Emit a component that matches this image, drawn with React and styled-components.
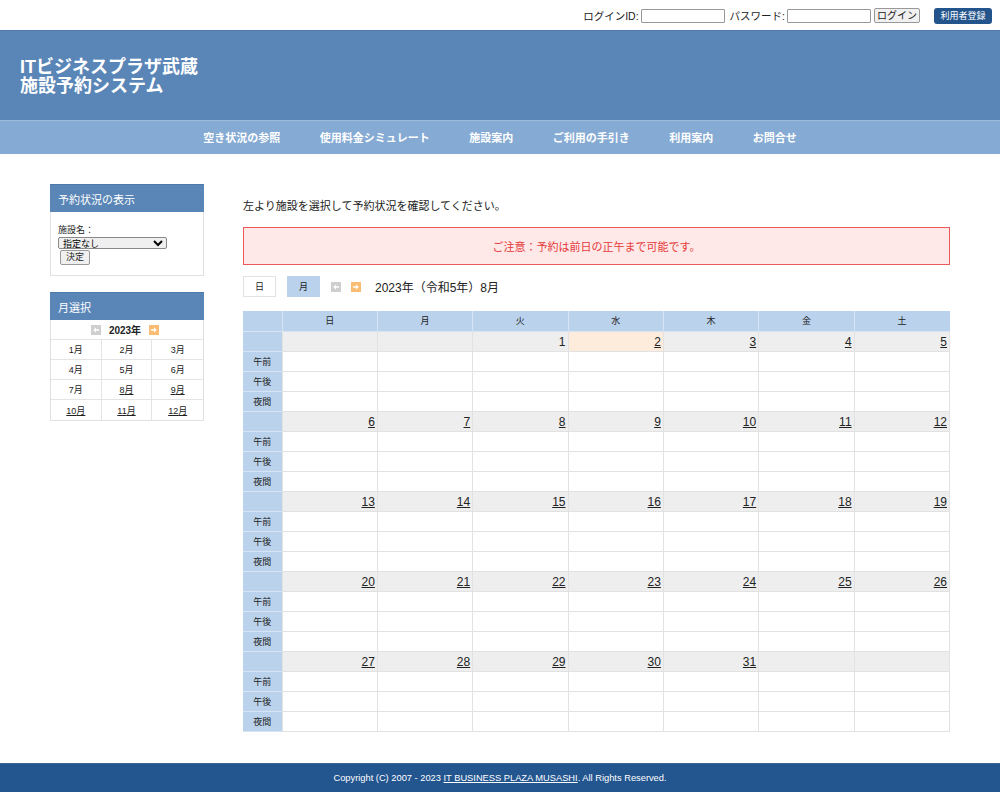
import React from 'react';
import styled, { createGlobalStyle } from 'styled-components';

const GlobalStyle = createGlobalStyle`
  html, body { margin: 0; padding: 0; background: #fff; }
  body {
    font-family: "Liberation Sans", "Noto Sans CJK JP", sans-serif;
    color: #222;
  }
  * { box-sizing: border-box; }
`;

const TopBar = styled.div`
  height: 31px;
  border-bottom: 1px solid #4d79ab;
  display: flex;
  align-items: center;
  justify-content: flex-end;
  padding: 1px 8px 0 0;
  font-size: 10.5px;
  color: #222;
`;

const LoginLabel = styled.label`
  margin-right: 2px;
  margin-left: 2px;
`;

const TextBox = styled.input`
  width: 84px;
  height: 14px;
  border: 1px solid #999;
  border-radius: 1px;
  margin-right: 3px;
  padding: 0;
`;

const GrayButton = styled.button`
  font-family: inherit;
  font-size: ${(p) => p.size || 10}px;
  width: ${(p) => p.w || 46}px;
  height: ${(p) => p.h || 15}px;
  padding: 0;
  background: #f0f0f0;
  border: 1px solid #999;
  border-radius: 2px;
  color: #222;
  line-height: 1;
`;

const RegisterButton = styled.button`
  font-family: inherit;
  margin-left: 14px;
  width: 58px;
  height: 16px;
  background: #24548c;
  color: #fff;
  border: none;
  border-radius: 3px;
  font-size: 9px;
  padding: 0;
`;

const Header = styled.header`
  height: 89px;
  background: #5a86b7;
  padding: 27px 0 0 20px;
  color: #fff;
  font-weight: bold;
  font-size: 18px;
  line-height: 19px;
`;

const Nav = styled.nav`
  height: 34px;
  background: #85aad3;
  border-top: 1px solid #9dbcdd;
  display: flex;
  justify-content: center;
  align-items: center;
  gap: 39.5px;
  padding: 0 0 1px 0;
`;

const NavItem = styled.a`
  color: #fff;
  font-size: 11px;
  font-weight: bold;
  text-decoration: none;
`;

const Body = styled.div`
  width: 900px;
  margin: 0 auto;
  padding-top: 30px;
  display: flex;
  gap: 39px;
  align-items: flex-start;
`;

const Sidebar = styled.aside`
  width: 154px;
  display: flex;
  flex-direction: column;
  gap: 16px;
`;

const Panel = styled.section`
  border: 1px solid #e0e0e0;
  border-top: none;
`;

const PanelHead = styled.h3`
  margin: 0 -1px;
  height: 28px;
  background: #5a86b7;
  border-top: 1px solid #4d79ab;
  color: #fff;
  font-size: 11px;
  font-weight: normal;
  display: flex;
  align-items: center;
  padding-left: 8px;
`;

const PanelBody = styled.div`
  height: 63px;
  padding: 11px 0 0 7px;
  font-size: 9px;
  display: flex;
  flex-direction: column;
  align-items: flex-start;
`;

const Select = styled.select`
  width: 109px;
  height: 12px;
  font-size: 9px;
  padding: 0;
  margin: 1px 0 1px 0;
  border: 1px solid #888;
  border-radius: 2px;
  font-family: inherit;
`;

const YearRow = styled.div`
  height: 20px;
  display: flex;
  align-items: center;
  justify-content: center;
  gap: 8px;
  font-size: 10px;
  font-weight: bold;
  border-bottom: 1px solid #e4e4e4;
  padding-right: 4px;
`;

const MonthGrid = styled.div`
  display: grid;
  grid-template-columns: repeat(3, 1fr);
`;

const MonthCell = styled.div`
  height: 20px;
  display: flex;
  align-items: center;
  justify-content: center;
  font-size: 9px;
  border-right: 1px solid #e4e4e4;
  border-bottom: 1px solid #e4e4e4;
  &:nth-child(3n) { border-right: none; }
  &:nth-last-child(-n + 3) { border-bottom: none; }
  text-decoration: ${(p) => (p.link ? 'underline' : 'none')};
`;

const ArrowBox = styled.span`
  display: inline-flex;
  width: 10px;
  height: 10px;
  background: ${(p) => (p.active ? '#fbbd74' : '#cfcfcf')};
  align-items: center;
  justify-content: center;
`;

const Main = styled.main`
  flex: 1;
  padding-top: 15px;
`;

const Intro = styled.p`
  margin: 0 0 14px;
  font-size: 11px;
  line-height: 14px;
`;

const Alert = styled.div`
  height: 38px;
  border: 1px solid #ea5a5a;
  background: #fee8e8;
  color: #e53a3a;
  font-size: 11px;
  display: flex;
  align-items: center;
  justify-content: center;
  margin-bottom: 11px;
`;

const Controls = styled.div`
  display: flex;
  align-items: center;
  height: 21px;
  margin-bottom: 14px;
`;

const ViewButton = styled.div`
  width: 33px;
  height: 21px;
  font-size: 9px;
  display: flex;
  align-items: center;
  justify-content: center;
  background: ${(p) => (p.active ? '#bad2ec' : '#fff')};
  border: 1px solid ${(p) => (p.active ? '#bad2ec' : '#e2e2e2')};
  margin-right: 11px;
`;

const Arrows = styled.div`
  display: flex;
  gap: 10px;
  margin-right: 14px;
`;

const Period = styled.span`
  font-size: 12px;
`;

const Table = styled.table`
  width: 100%;
  border-collapse: collapse;
  table-layout: fixed;
  font-size: 9px;
`;

const Th = styled.th`
  height: 20px;
  background: #bad2ec;
  font-weight: normal;
  border: 1px solid #d6e4f3;
  border-top: none;
  &:first-child { border-left: none; }
  &:last-child { border-right: none; }
`;

const Label = styled.td`
  height: 20px;
  background: #bad2ec;
  border-bottom: 1px solid #d6e4f3;
  text-align: center;
`;

const DateCell = styled.td`
  height: 20px;
  background: ${(p) => (p.today ? '#fdecdc' : '#eeeeee')};
  border: 1px solid #e2e2e2;
  text-align: right;
  padding: 2px 2px 0 0;
  font-size: 12px;
  text-decoration: ${(p) => (p.link ? 'underline' : 'none')};
`;

const SlotCell = styled.td`
  height: 20px;
  border: 1px solid #e2e2e2;
`;

const Footer = styled.footer`
  margin-top: 31px;
  height: 29px;
  background: #23558f;
  border-top: 1px solid #36659b;
  color: #fff;
  font-size: 9.3px;
  display: flex;
  align-items: center;
  justify-content: center;
  a { color: #fff; }
`;

const Arrow = ({ right }) => (
  <svg width="6" height="6" viewBox="0 0 6 6">
    <path d={right ? 'M0 2.3H3V0.5L5.8 3L3 5.5V3.7H0Z' : 'M6 2.3H3V0.5L0.2 3L3 5.5V3.7H6Z'} fill="#fff" />
  </svg>
);

const weekdays = ['日', '月', '火', '水', '木', '金', '土'];
const weeks = [
  [null, null, 1, 2, 3, 4, 5],
  [6, 7, 8, 9, 10, 11, 12],
  [13, 14, 15, 16, 17, 18, 19],
  [20, 21, 22, 23, 24, 25, 26],
  [27, 28, 29, 30, 31, null, null],
];
const slots = ['午前', '午後', '夜間'];
const navItems = ['空き状況の参照', '使用料金シミュレート', '施設案内', 'ご利用の手引き', '利用案内', 'お問合せ'];

export default function App() {
  return (
    <>
      <GlobalStyle />
      <TopBar>
        <LoginLabel>ログインID:</LoginLabel>
        <TextBox />
        <LoginLabel>パスワード:</LoginLabel>
        <TextBox />
        <GrayButton>ログイン</GrayButton>
        <RegisterButton>利用者登録</RegisterButton>
      </TopBar>
      <Header>
        ITビジネスプラザ武蔵<br />
        施設予約システム
      </Header>
      <Nav>
        {navItems.map((n) => (
          <NavItem key={n}>{n}</NavItem>
        ))}
      </Nav>
      <Body>
        <Sidebar>
          <Panel>
            <PanelHead>予約状況の表示</PanelHead>
            <PanelBody>
              <span>施設名：</span>
              <Select>
                <option>指定なし</option>
              </Select>
              <GrayButton size={9} w={30} h={15} style={{ marginLeft: 2 }}>決定</GrayButton>
            </PanelBody>
          </Panel>
          <Panel>
            <PanelHead>月選択</PanelHead>
            <YearRow>
              <ArrowBox><Arrow /></ArrowBox>
              <span>2023年</span>
              <ArrowBox active><Arrow right /></ArrowBox>
            </YearRow>
            <MonthGrid>
              {Array.from({ length: 12 }, (_, i) => (
                <MonthCell key={i} link={i >= 7}>{i + 1}月</MonthCell>
              ))}
            </MonthGrid>
          </Panel>
        </Sidebar>
        <Main>
          <Intro>左より施設を選択して予約状況を確認してください。</Intro>
          <Alert>ご注意：予約は前日の正午まで可能です。</Alert>
          <Controls>
            <ViewButton>日</ViewButton>
            <ViewButton active>月</ViewButton>
            <Arrows>
              <ArrowBox><Arrow /></ArrowBox>
              <ArrowBox active><Arrow right /></ArrowBox>
            </Arrows>
            <Period>2023年（令和5年）8月</Period>
          </Controls>
          <Table>
            <colgroup>
              <col style={{ width: 39 }} />
            </colgroup>
            <thead>
              <tr>
                <Th />
                {weekdays.map((d) => (
                  <Th key={d}>{d}</Th>
                ))}
              </tr>
            </thead>
            <tbody>
              {weeks.map((w, wi) => (
                <React.Fragment key={wi}>
                  <tr>
                    <Label />
                    {w.map((d, di) => (
                      <DateCell key={di} today={d === 2} link={d && d >= 2}>
                        {d || ''}
                      </DateCell>
                    ))}
                  </tr>
                  {slots.map((s) => (
                    <tr key={s}>
                      <Label>{s}</Label>
                      {w.map((_, di) => (
                        <SlotCell key={di} />
                      ))}
                    </tr>
                  ))}
                </React.Fragment>
              ))}
            </tbody>
          </Table>
        </Main>
      </Body>
      <Footer>
        Copyright (C) 2007 - 2023&nbsp;<a href="#">IT BUSINESS PLAZA MUSASHI</a>. All Rights Reserved.
      </Footer>
    </>
  );
}
